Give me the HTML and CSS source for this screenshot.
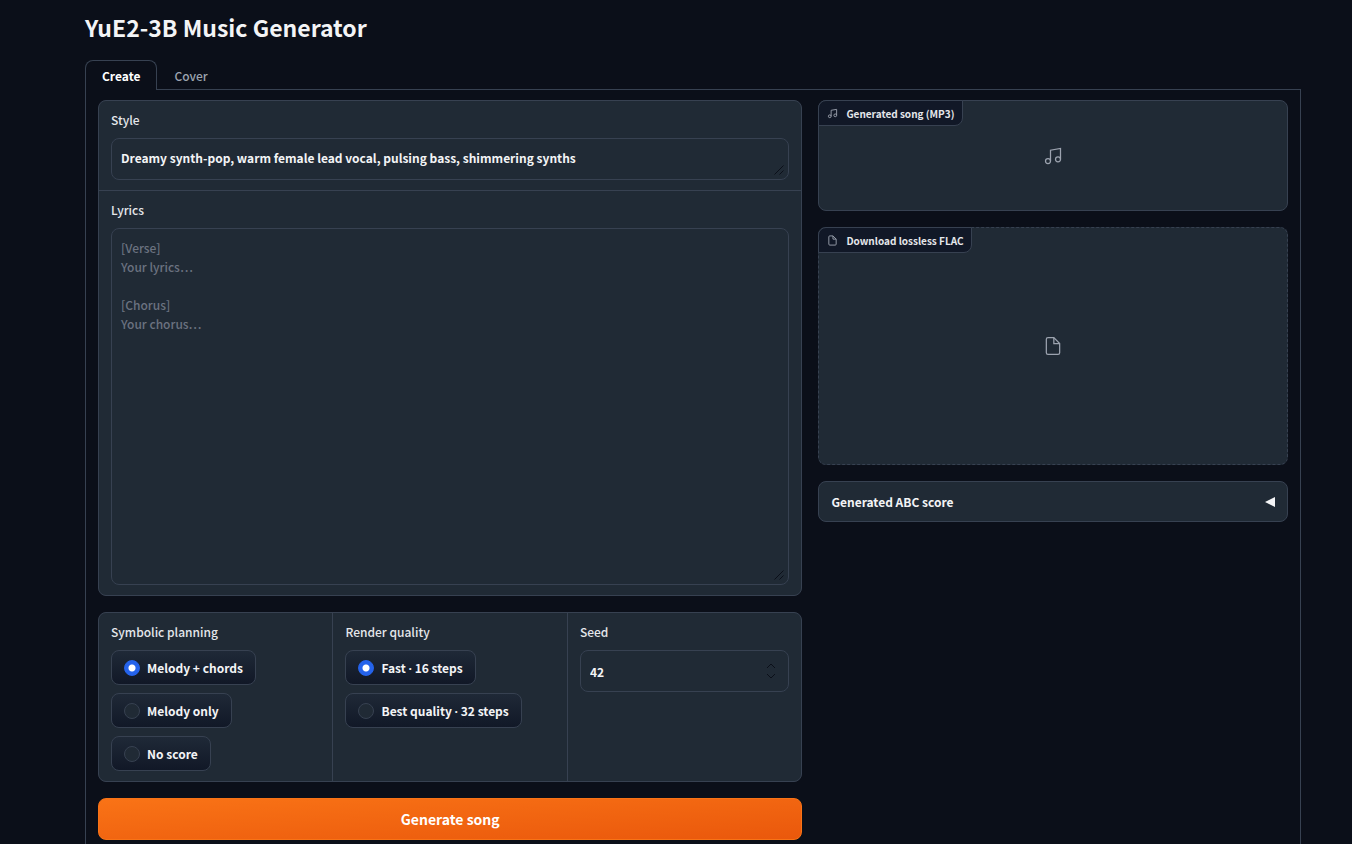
FILE: index.html
```
<!DOCTYPE html>
<html lang="en">
<head>
  <meta charset="UTF-8" />
  <title>YuE2-3B Music Generator</title>
  <meta name="viewport" content="width=device-width, initial-scale=1.0" />
  <link rel="stylesheet" href="styles.css">
</head>
<body>
  <svg class="sprite" aria-hidden="true">
    <symbol id="icon-music" viewBox="0 0 24 24">
      <path d="M9 18V5l12-2v13"/><circle cx="6" cy="18" r="3"/><circle cx="18" cy="16" r="3"/>
    </symbol>
    <symbol id="icon-file" viewBox="0 0 24 24">
      <path d="M13 2H6a2 2 0 0 0-2 2v16a2 2 0 0 0 2 2h12a2 2 0 0 0 2-2V9z"/><path d="M13 2v7h7"/>
    </symbol>
    <symbol id="icon-grip" viewBox="0 0 10 10">
      <path d="M0.5 9.5l9-9M5.5 9.5l4-4"/>
    </symbol>
  </svg>

  <main class="app">
    <h1>YuE2-3B Music Generator</h1>

    <div class="tabs" role="tablist">
      <button class="tab selected" role="tab" aria-selected="true">Create</button>
      <button class="tab" role="tab" aria-selected="false">Cover</button>
    </div>

    <div class="tab-panel" role="tabpanel">
      <div class="column inputs">
        <div class="form">
          <div class="block">
            <label class="block-label" for="style">Style</label>
            <div class="field">
              <textarea id="style" class="text-input" rows="1">Dreamy synth-pop, warm female lead vocal, pulsing bass, shimmering synths</textarea>
              <svg class="grip"><use href="#icon-grip"/></svg>
            </div>
          </div>
          <div class="block">
            <label class="block-label" for="lyrics">Lyrics</label>
            <div class="field">
              <textarea id="lyrics" class="text-input" rows="18" placeholder="[Verse]&#10;Your lyrics…&#10;&#10;[Chorus]&#10;Your chorus…"></textarea>
              <svg class="grip"><use href="#icon-grip"/></svg>
            </div>
          </div>
        </div>

        <div class="form form-row">
          <fieldset class="block">
            <legend class="block-label">Symbolic planning</legend>
            <div class="options">
              <label class="option"><input type="radio" name="planning" checked> <span>Melody + chords</span></label>
              <label class="option"><input type="radio" name="planning"> <span>Melody only</span></label>
              <label class="option"><input type="radio" name="planning"> <span>No score</span></label>
            </div>
          </fieldset>
          <fieldset class="block">
            <legend class="block-label">Render quality</legend>
            <div class="options">
              <label class="option"><input type="radio" name="quality" checked> <span>Fast <span class="dot">·</span> 16 steps</span></label>
              <label class="option"><input type="radio" name="quality"> <span>Best quality <span class="dot">·</span> 32 steps</span></label>
            </div>
          </fieldset>
          <div class="block">
            <label class="block-label" for="seed">Seed</label>
            <div class="field">
              <input id="seed" class="text-input" type="number" value="42">
              <svg class="spinner" viewBox="0 0 10 16"><path d="M1 5l4-4 4 4M1 11l4 4 4-4"/></svg>
            </div>
          </div>
        </div>

        <button class="generate">Generate song</button>
      </div>

      <div class="column outputs">
        <section class="output audio">
          <div class="badge"><svg class="badge-icon"><use href="#icon-music"/></svg>Generated song (MP3)</div>
          <svg class="empty-icon"><use href="#icon-music"/></svg>
        </section>
        <section class="output file">
          <div class="badge"><svg class="badge-icon"><use href="#icon-file"/></svg>Download lossless FLAC</div>
          <svg class="empty-icon"><use href="#icon-file"/></svg>
        </section>
        <button class="accordion" aria-expanded="false">
          Generated ABC score
          <svg class="arrow" viewBox="0 0 10 10"><path d="M0 5l10-5v10z"/></svg>
        </button>
      </div>
    </div>
  </main>
</body>
</html>
```
FILE: styles.css
```
* {
  box-sizing: border-box;
}
body {
  --bg: #0b0f19;
  --panel: #202a35;
  --border: #374151;
  --text: #f3f4f6;
  margin: 0;
  background: var(--bg);
  color: var(--text);
  font-family: "Noto Sans CJK SC", sans-serif;
  font-size: 12px;
  font-weight: 500;
  line-height: 19px;
}
button, input, textarea {
  font: inherit;
  color: inherit;
}
button {
  cursor: pointer;
}
svg {
  fill: none;
  stroke: currentColor;
}
.sprite {
  display: none;
}
.app {
  padding: 11px 51px 0 85px;
}
h1 {
  margin: 0 0 17px;
  font-size: 23px;
  font-weight: 700;
  line-height: 32px;
}

/* tabs */
.tabs {
  display: flex;
}
.tab {
  height: 29px;
  padding: 0 16px;
  border: 1px solid transparent;
  border-bottom: 0;
  background: none;
  color: #9ca3af;
}
.tab.selected {
  position: relative;
  margin-bottom: -1px;
  height: 30px;
  border-color: var(--border);
  border-radius: 8px 8px 0 0;
  background: var(--bg);
  color: #fff;
  font-weight: 700;
}
.tab-panel {
  display: flex;
  gap: 16px;
  padding: 10px 12px;
  border: 1px solid var(--border);
}
.column {
  display: flex;
  flex-direction: column;
  gap: 16px;
  min-width: 0;
}
.inputs {
  flex: 3 1 0;
}
.outputs {
  flex: 2 1 0;
}

/* forms */
.form {
  display: flex;
  flex-direction: column;
  gap: 1px;
  overflow: hidden;
  border: 1px solid var(--border);
  border-radius: 8px;
  background: var(--border);
}
.form-row {
  display: grid;
  grid-template-columns: repeat(3, 1fr);
}
.block {
  margin: 0;
  min-width: 0;
  padding: 10px 12px;
  border: 0;
  background: var(--panel);
}
.block-label {
  display: block;
  float: left;
  width: 100%;
  margin-bottom: 10px;
  padding: 0;
  color: #e5e7eb;
  line-height: 17px;
}
.field {
  position: relative;
  clear: both;
}
.text-input {
  display: block;
  width: 100%;
  padding: 9px;
  border: 1px solid var(--border);
  border-radius: 8px;
  background: var(--panel);
  outline: none;
  resize: none;
  font-weight: 700;
}
#style, #seed {
  height: 42px;
}
#lyrics {
  height: 357px;
}
.text-input::placeholder {
  color: #6b7280;
  font-weight: 500;
}
.text-input::-webkit-inner-spin-button {
  appearance: none;
}
.grip {
  position: absolute;
  right: 5px;
  bottom: 5px;
  width: 10px;
  height: 10px;
  color: #0b0f19;
}
.spinner {
  position: absolute;
  right: 13px;
  top: 13px;
  width: 10px;
  height: 16px;
  color: #0b0f19;
}

/* radio options */
.options {
  display: flex;
  flex-direction: column;
  align-items: flex-start;
  gap: 8px;
  clear: both;
}
.option {
  display: flex;
  align-items: center;
  gap: 7px;
  height: 35px;
  padding: 0 12px;
  border: 1px solid var(--border);
  border-radius: 8px;
  background: linear-gradient(to bottom, #1f2937, #111827);
  font-weight: 700;
  line-height: 17px;
  cursor: pointer;
}
.option input {
  appearance: none;
  width: 16px;
  height: 16px;
  margin: 0;
  border: 1px solid var(--border);
  border-radius: 50%;
  background: var(--panel);
}
.option input:checked {
  border-color: #2563eb;
  background: radial-gradient(circle, #fff 3px, #2563eb 4px);
}
.dot {
  font-family: "Open Sans", sans-serif;
}
.generate {
  height: 42px;
  border: 1px solid #f97316;
  border-radius: 8px;
  background: linear-gradient(to bottom right, #f97316, #ea580c);
  color: #fff;
  font-size: 14px;
  font-weight: 700;
}

/* outputs */
.output {
  display: flex;
  align-items: center;
  justify-content: center;
  position: relative;
  border: 1px solid var(--border);
  border-radius: 8px;
  background: var(--panel);
}
.audio {
  min-height: 111px;
}
.file {
  min-height: 238px;
  border-style: dashed;
}
.badge {
  position: absolute;
  top: -1px;
  left: -1px;
  display: flex;
  align-items: center;
  gap: 8px;
  height: 26px;
  padding: 0 8px;
  border: 1px solid var(--border);
  border-radius: 8px 0 8px 0;
  background: #111827;
  color: #e5e7eb;
  font-size: 10px;
  font-weight: 700;
}
.badge-icon {
  width: 11px;
  height: 11px;
  color: #9ca3af;
  stroke-width: 2;
}
.empty-icon {
  width: 20px;
  height: 20px;
  color: #9ca3af;
  stroke-width: 1.5;
}
.accordion {
  display: flex;
  align-items: center;
  justify-content: space-between;
  height: 41px;
  padding: 0 12px;
  border: 1px solid var(--border);
  border-radius: 8px;
  background: var(--panel);
  font-weight: 700;
}
.arrow {
  width: 10px;
  height: 10px;
  fill: var(--text);
  stroke: none;
}
```
